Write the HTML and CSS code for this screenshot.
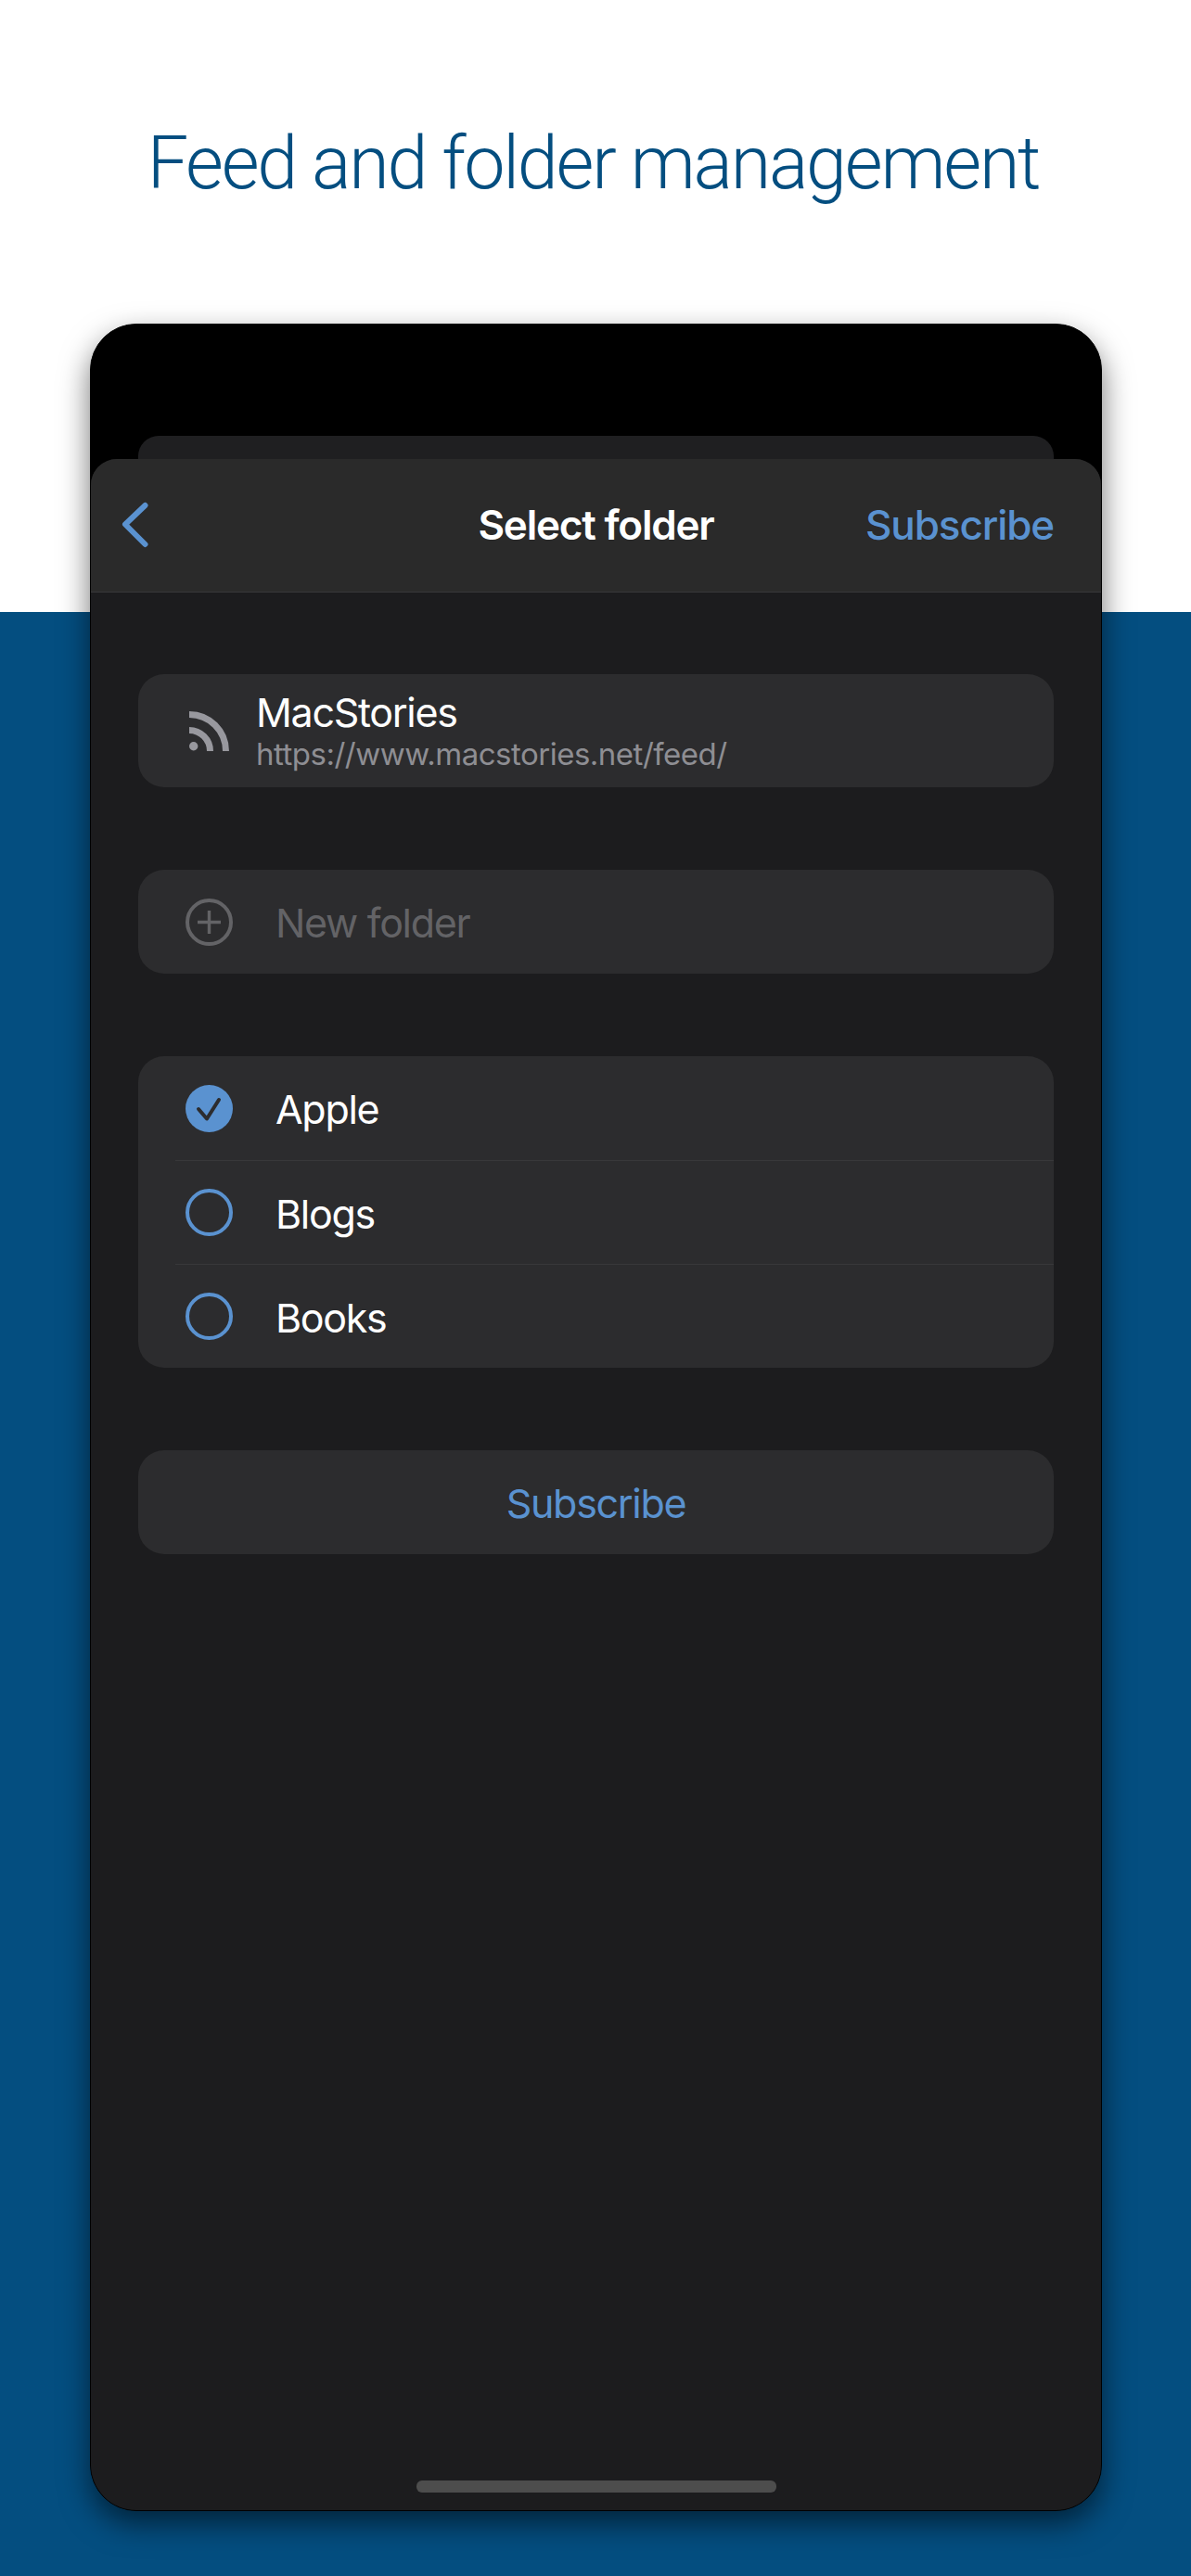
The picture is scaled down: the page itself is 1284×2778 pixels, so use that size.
FILE: index.html
```html
<!DOCTYPE html>
<html lang="en">
<head>
    <meta charset="UTF-8">
    <meta name="viewport" content="width=device-width, initial-scale=1.0">
    <title>Feed and folder management</title>
    <link rel="stylesheet" href="styles.css">
</head>
<body>
    <header class="headline">
        <h1>Feed and folder management</h1>
    </header>

    <div class="phone">
        <div class="back-card"></div>
        <div class="sheet">
            <nav class="nav">
                <svg class="nav-back" width="30" height="50" viewBox="0 0 30 50">
                    <path d="M25.5 4 L4 24.5 L25.5 46" fill="none" stroke="#5a92d0" stroke-width="6" stroke-linecap="round" stroke-linejoin="round"/>
                </svg>
                <div class="nav-title">Select folder</div>
                <div class="nav-action">Subscribe</div>
            </nav>

            <main class="content">
                <section class="card feed">
                    <svg class="feed-icon" width="43" height="43" viewBox="0 0 43 43">
                        <circle cx="4.7" cy="37.8" r="4.7" fill="#98989e"/>
                        <path d="M0 3.5 A39.5 39.5 0 0 1 39.5 43" fill="none" stroke="#98989e" stroke-width="7"/>
                        <path d="M0 20.5 A22.5 22.5 0 0 1 22.5 43" fill="none" stroke="#98989e" stroke-width="7"/>
                    </svg>
                    <div class="feed-text">
                        <div class="feed-name">MacStories</div>
                        <div class="feed-url">https://www.macstories.net/feed/</div>
                    </div>
                </section>

                <section class="card new-folder">
                    <svg class="mark" width="51" height="51" viewBox="0 0 51 51">
                        <circle cx="25.5" cy="25.5" r="23.5" fill="none" stroke="#636366" stroke-width="4"/>
                        <path d="M13 25.5 H38 M25.5 13 V38" fill="none" stroke="#636366" stroke-width="3.4"/>
                    </svg>
                    <span class="label">New folder</span>
                </section>

                <section class="card">
                    <div class="row">
                        <svg class="mark" width="51" height="51" viewBox="0 0 51 51">
                            <circle cx="25.5" cy="25.5" r="25.5" fill="#5a92d0"/>
                            <path d="M14 26 L23 36.5 L36 16" fill="none" stroke="#2c2c2e" stroke-width="4" stroke-linecap="round" stroke-linejoin="round"/>
                        </svg>
                        <span class="label">Apple</span>
                    </div>
                    <div class="row">
                        <svg class="mark" width="51" height="51" viewBox="0 0 51 51">
                            <circle cx="25.5" cy="25.5" r="23.5" fill="none" stroke="#5a92d0" stroke-width="4"/>
                        </svg>
                        <span class="label">Blogs</span>
                    </div>
                    <div class="row">
                        <svg class="mark" width="51" height="51" viewBox="0 0 51 51">
                            <circle cx="25.5" cy="25.5" r="23.5" fill="none" stroke="#5a92d0" stroke-width="4"/>
                        </svg>
                        <span class="label">Books</span>
                    </div>
                </section>

                <section class="card subscribe">
                    <span class="label">Subscribe</span>
                </section>
            </main>

            <div class="home-bar"></div>
        </div>
    </div>
</body>
</html>
```

FILE: styles.css
```css
* {
    box-sizing: border-box;
}

body {
    margin: 0;
    width: 1284px;
    height: 2778px;
    overflow: hidden;
    font-family: Inter, "Liberation Sans", sans-serif;
    color: #fff;
    background: linear-gradient(#fff 660px, #044e80 660px);
}

.headline {
    height: 349px;
    display: flex;
    justify-content: center;
    align-items: center;
}

h1 {
    margin: 0;
    padding: 2px 5px 0 0;
    font-family: Roboto, "Liberation Sans", sans-serif;
    font-size: 79px;
    font-weight: 300;
    letter-spacing: -2.2px;
    color: #044e80;
}

.phone {
    width: 1091px;
    height: 2359px;
    margin-left: 97px;
    padding-top: 120px;
    display: flex;
    flex-direction: column;
    border: 1px solid #000;
    border-radius: 50px;
    overflow: hidden;
    background-color: #000;
    box-shadow: 0 14px 32px rgba(0, 0, 0, 0.55);
}

.back-card {
    flex: none;
    height: 25px;
    margin: 0 51px;
    border-radius: 22px 22px 0 0;
    background-color: #1f1f21;
}

.sheet {
    flex: 1;
    display: flex;
    flex-direction: column;
    border-radius: 28px 28px 0 0;
    overflow: hidden;
    background-color: #1c1c1e;
}

.nav {
    flex: none;
    height: 144px;
    padding: 0 51px 2px;
    display: grid;
    grid-template-columns: 1fr auto 1fr;
    align-items: center;
    border-bottom: 1px solid #38383a;
    background-color: #2a2a2a;
}

.nav-back {
    margin-left: -18px;
}

.nav-title {
    font-size: 44px;
    font-weight: 600;
    letter-spacing: -1.2px;
}

.nav-action {
    justify-self: end;
    font-size: 44px;
    font-weight: 500;
    letter-spacing: -1.1px;
    color: #5a92d0;
}

.content {
    flex: 1;
    padding: 88px 51px 0;
    display: flex;
    flex-direction: column;
    gap: 89px;
}

.card {
    border-radius: 28px;
    background-color: #2c2c2e;
    font-size: 43px;
    letter-spacing: -1.3px;
}

.label {
    padding-top: 2px;
}

.feed {
    height: 122px;
    padding-left: 55px;
    display: flex;
    align-items: center;
    gap: 29px;
}

.feed-icon {
    flex: none;
}

.feed-name {
    line-height: 50px;
}

.feed-url {
    font-size: 33px;
    line-height: 40px;
    letter-spacing: -0.5px;
    color: #8e8e93;
}

.new-folder {
    height: 112px;
    padding-left: 51px;
    display: flex;
    align-items: center;
    gap: 46px;
    color: #636366;
}

.mark {
    flex: none;
}

.row {
    height: 112px;
    margin-left: 40px;
    padding-left: 11px;
    display: flex;
    align-items: center;
    gap: 46px;
}

.row + .row {
    border-top: 1px solid #38383a;
}

.subscribe {
    height: 112px;
    display: flex;
    justify-content: center;
    align-items: center;
    color: #5a92d0;
}

.home-bar {
    flex: none;
    width: 388px;
    height: 13px;
    margin: 0 auto 19px;
    border-radius: 6px;
    background-color: #4d4d4d;
}
```
